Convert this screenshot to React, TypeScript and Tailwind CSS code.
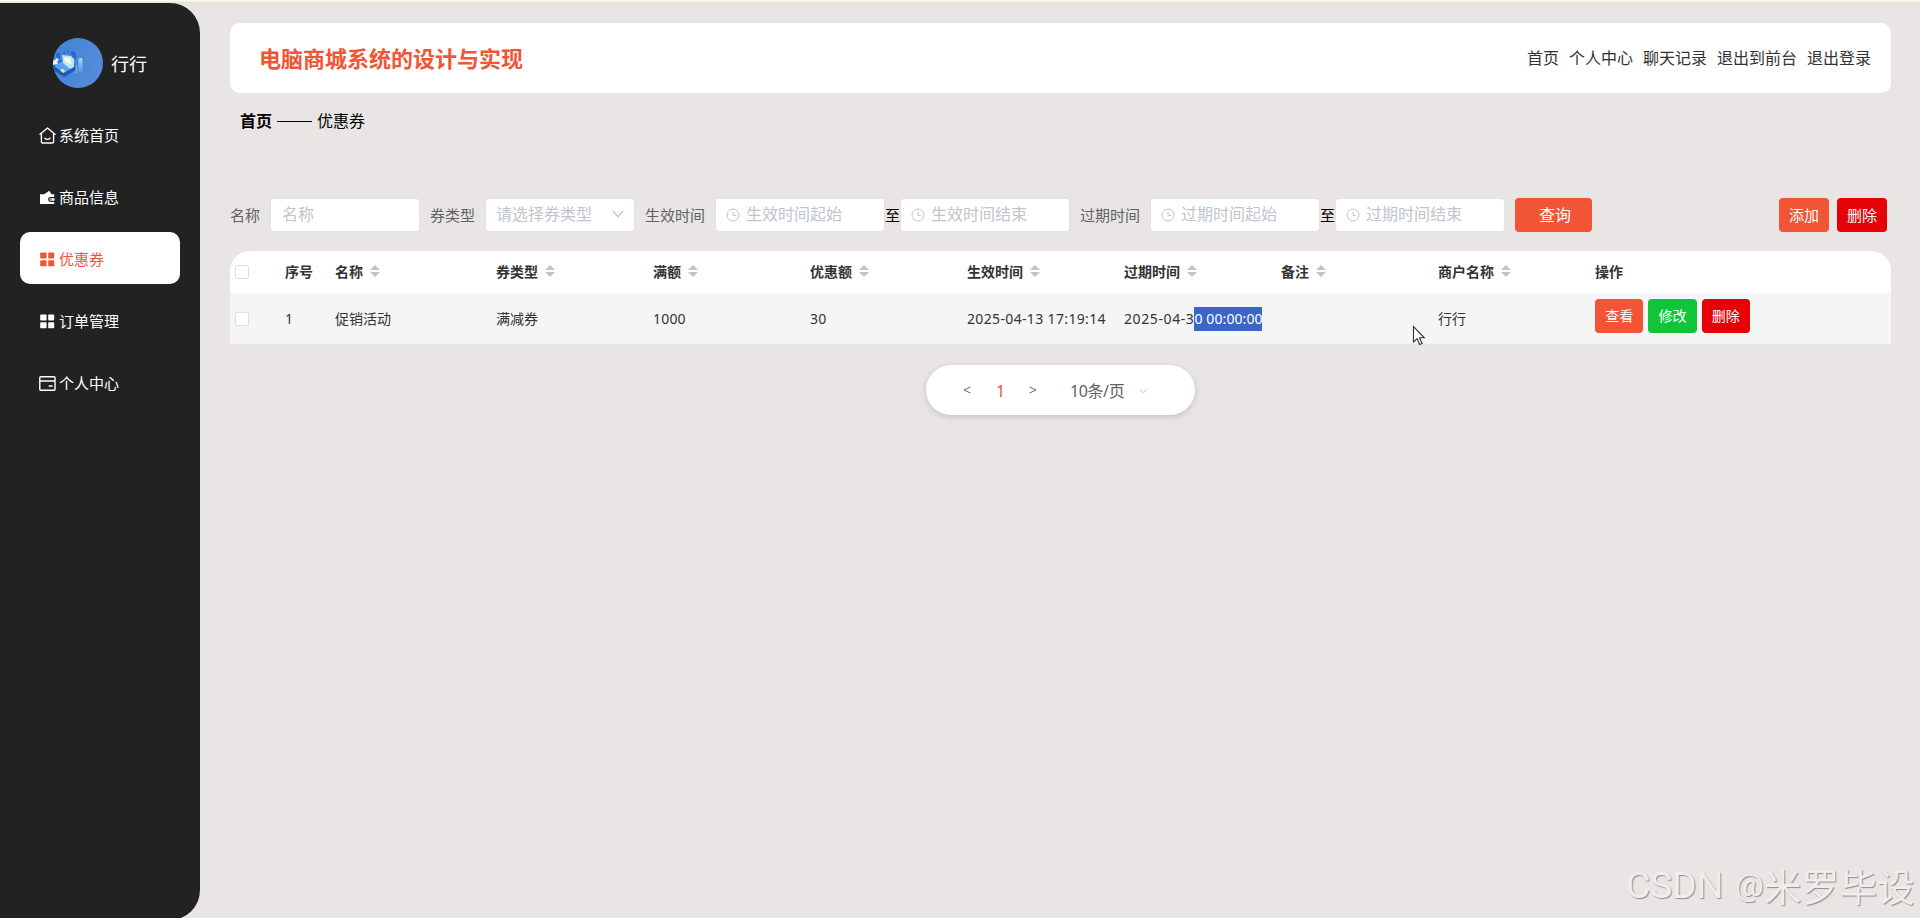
import React from 'react';
import clsx from 'clsx';

const HomeIcon = () => (
  <svg width="17" height="17" viewBox="0 0 17 17" fill="none" stroke="currentColor" strokeWidth="1.4" strokeLinecap="round" strokeLinejoin="round">
    <path d="M1 7.2 8.5 1 16 7.2M2.4 6.4v8.4c0 .7.4 1.2 1.2 1.2h9.8c.8 0 1.2-.5 1.2-1.2V6.4M6 11.2c1.3 1.3 3.7 1.3 5 0" />
  </svg>
);

const WalletIcon = () => (
  <svg width="17" height="17" viewBox="0 0 17 17" fill="currentColor">
    <path d="M1 5.2h4.2l5.2-3.4 2 3.4h2.8v2.9h-3.7a2.4 2.4 0 0 0 0 4.8h3.7V15H1Z" />
    <path d="M11.7 9.2h3.8v2.5h-3.8a1.25 1.25 0 0 1 0-2.5Z" />
    <circle cx="12" cy="10.45" r=".6" fill="#222" />
  </svg>
);

const GridIcon = () => (
  <svg width="17" height="17" viewBox="0 0 17 17" fill="currentColor">
    <rect x="1.2" y="1.5" width="6.4" height="6" rx=".8" />
    <rect x="9.2" y="1.5" width="6" height="6" rx=".8" />
    <rect x="1.2" y="9.3" width="6.4" height="6" rx=".8" />
    <rect x="9.2" y="9.3" width="6" height="6" rx=".8" />
  </svg>
);

const CardIcon = () => (
  <svg width="17" height="17" viewBox="0 0 17 17" fill="none" stroke="currentColor" strokeWidth="1.4" strokeLinejoin="round">
    <rect x=".8" y="1.7" width="15.2" height="13.6" rx="1" />
    <path d="M.8 6h15.2M9.7 11h3.8" />
  </svg>
);

const ClockIcon = () => (
  <svg width="14" height="14" viewBox="0 0 14 14" fill="none" stroke="#c0c4cc" strokeWidth="1">
    <circle cx="7" cy="7" r="6" />
    <path d="M7 3.6V7.4h3.2" />
  </svg>
);

const ArrowDown = ({ className }: any) => (
  <svg className={className} viewBox="0 0 12 8" fill="none" stroke="#b6bac2" strokeWidth="1.1">
    <path d="M1 1.2 6 6.6l5-5.4" />
  </svg>
);

const Avatar = () => (
  <svg width="50" height="50" viewBox="0 0 50 50">
    <defs>
      <clipPath id="round">
        <circle cx="25" cy="25" r="25" />
      </clipPath>
      <linearGradient id="sky" x1="0" y1="0" x2="1" y2="0.3">
        <stop offset="0" stopColor="#3f83d3" />
        <stop offset="1" stopColor="#558bdb" />
      </linearGradient>
      <linearGradient id="bar" x1="0" y1="0" x2="0" y2="1">
        <stop offset="0" stopColor="#a6dcfa" />
        <stop offset="1" stopColor="#5a98e2" />
      </linearGradient>
    </defs>
    <g clipPath="url(#round)">
      <rect width="50" height="50" fill="url(#sky)" />
      <path d="m0 27 11-6 12 6v5l-12 7L0 32Z" fill="#2158bd" />
      <path d="m1 28 10-6 11 6-11 7Z" fill="#5ba2ef" />
      <path d="m3 16 4-2v8H3ZM17 14l3-1 3 2v7l-3-2Z" fill="#2c68cc" />
      <path d="m9 17 9 1 3 3v8l-4 2-7-6Z" fill="#bfe2f6" />
      <path d="m11 19 6 1 2 6-7-2Z" fill="#f8fbdc" />
      <path d="m0 22 4 1 1 3-5 1ZM3 20l3 1-2 3-2-1Z" fill="#e8f7ff" />
      <path d="m7 32 3-1 2 2-2 2Z" fill="#f3e9a0" />
      <path d="M11 15.500v-2M15 15v-2" stroke="#2562c9" strokeWidth="1.200" />
      <rect x="25.500" y="20" width="4" height="14" rx="1.500" fill="url(#bar)" />
      <rect x="22.500" y="27" width="1.500" height="8" fill="#74b5f0" />
    </g>
  </svg>
);

const menus = [
  { name: '系统首页', icon: <HomeIcon /> },
  { name: '商品信息', icon: <WalletIcon /> },
  { name: '优惠券', icon: <GridIcon />, active: true },
  { name: '订单管理', icon: <GridIcon /> },
  { name: '个人中心', icon: <CardIcon /> },
];

const links = ['首页', '个人中心', '聊天记录', '退出到前台', '退出登录'];

const columns = [
  { label: '序号' },
  { label: '名称', sortable: true },
  { label: '券类型', sortable: true },
  { label: '满额', sortable: true },
  { label: '优惠额', sortable: true },
  { label: '生效时间', sortable: true },
  { label: '过期时间', sortable: true },
  { label: '备注', sortable: true },
  { label: '商户名称', sortable: true },
  { label: '操作' },
];

const gridCols = 'grid grid-cols-[55px_50px_161px_repeat(7,157px)_1fr] items-center';

const Checkbox = () => (
  <span className="ml-[5px] block h-3.5 w-3.5 rounded-[2px] border border-[#dcdfe6] bg-white" />
);

const SortCaret = () => (
  <span className="mb-0.5 ml-[7px] flex flex-col gap-[2px]">
    <span className="border-x-[5px] border-b-[5px] border-x-transparent border-b-[#c0c4cc]" />
    <span className="border-x-[5px] border-t-[5px] border-x-transparent border-t-[#c0c4cc]" />
  </span>
);

const Label = ({ children }: any) => (
  <span className="mr-[11px] mt-px text-[15px] text-[#606266]">{children}</span>
);

const DateInput = ({ placeholder }: any) => (
  <div className="flex h-8 w-[168px] items-center rounded-[3px] bg-white pl-2.5 text-base text-[#c0c4cc] shadow-[0_0_0_1px_#e2e1e3]">
    <ClockIcon />
    <span className="mb-0.5 ml-[6px]">{placeholder}</span>
  </div>
);

const DateRange = ({ label }: any) => (
  <div className="mr-[11px] flex items-center">
    <Label>{label}</Label>
    <DateInput placeholder={`${label}起始`} />
    <span className="w-[17px] text-center text-[15px] text-black">至</span>
    <DateInput placeholder={`${label}结束`} />
  </div>
);

const Button = ({ className, children }: any) => (
  <button className={clsx('h-[34px] rounded-[4px] text-white', className)}>{children}</button>
);

const Sidebar = () => (
  <aside className="h-[917px] w-[200px] shrink-0 rounded-r-[30px] bg-[#222] px-5 text-white">
    <div className="flex h-[105px] items-start pl-[33px] pt-[35px]">
      <Avatar />
      <span className="ml-2 mt-3 text-lg leading-7">行行</span>
    </div>
    <nav className="flex flex-col gap-2.5">
      {menus.map((item) => (
        <div
          key={item.name}
          className={clsx(
            'flex h-[52px] items-center rounded-[10px] pl-[18.5px] pt-[2px] text-[15px]',
            item.active && 'bg-white text-[#f15536]'
          )}
        >
          {item.icon}
          <span className="ml-[3.5px]">{item.name}</span>
        </div>
      ))}
    </nav>
  </aside>
);

const Header = () => (
  <header className="flex h-[70px] items-center justify-between rounded-[10px] bg-white pl-[29px] pr-5">
    <h1 className="text-[22px] font-bold text-[#f15536]">电脑商城系统的设计与实现</h1>
    <div className="flex gap-2.5 text-base text-[#333]">
      {links.map((link) => (
        <a key={link}>{link}</a>
      ))}
    </div>
  </header>
);

const Filters = () => (
  <div className="mt-[48px] flex h-[34px] items-center">
    <Label>名称</Label>
    <div className="mr-[11px] flex h-8 w-[148px] items-center rounded-[3px] bg-white pb-0.5 pl-[11px] text-base text-[#c0c4cc] shadow-[0_0_0_1px_#e2e1e3]">
      名称
    </div>
    <Label>券类型</Label>
    <div className="mr-[11px] flex h-8 w-[148px] items-center justify-between rounded-[3px] bg-white pb-0.5 pl-2.5 pr-[10px] text-base text-[#c0c4cc] shadow-[0_0_0_1px_#e2e1e3]">
      请选择券类型
      <ArrowDown className="h-2 w-3" />
    </div>
    <DateRange label="生效时间" />
    <DateRange label="过期时间" />
    <Button className="w-[77px] bg-[#f15536] pb-px pl-[3px] text-base">查询</Button>
    <div className="ml-auto mr-1 flex gap-2 text-[15px]">
      <Button className="w-[50px] bg-[#f15536]">添加</Button>
      <Button className="w-[50px] bg-[#e60008]">删除</Button>
    </div>
  </div>
);

const CouponTable = () => (
  <div className="mt-[19px] overflow-hidden rounded-t-[20px] text-sm text-[#333]">
    <div className={clsx(gridCols, 'h-[42px] bg-white font-bold')}>
      <Checkbox />
      {columns.map((col) => (
        <div key={col.label} className="flex items-center">
          {col.label}
          {col.sortable && <SortCaret />}
        </div>
      ))}
    </div>
    <div className={clsx(gridCols, 'h-[51px] bg-[#f5f5f6]')}>
      <Checkbox />
      <span>1</span>
      <span>促销活动</span>
      <span>满减券</span>
      <span className="tracking-[0.2px]">1000</span>
      <span className="tracking-[0.2px]">30</span>
      <span className="whitespace-nowrap tracking-[0.35px]">2025-04-13 17:19:14</span>
      <span className="whitespace-nowrap">
        <span className="tracking-[0.6px]">2025-04-3</span>
        <span className="inline-block h-6 w-[68px] bg-[#3a66c8] leading-6 tracking-[0.1px] text-white">0 00:00:00</span>
      </span>
      <span />
      <span>行行</span>
      <div className="mb-1.5 flex gap-[5px]">
        <Button className="w-[48.3px] bg-[#f15536]">查看</Button>
        <Button className="w-[48.3px] bg-[#11c53b]">修改</Button>
        <Button className="w-[48.3px] bg-[#e60008]">删除</Button>
      </div>
    </div>
  </div>
);

const Pagination = () => (
  <div className="mx-auto mt-[21px] flex h-[50px] w-[269px] items-center rounded-full bg-white pl-[37px] text-[#606266] shadow-[0_2px_6px_rgba(0,0,0,0.16)]">
    <svg width="8" height="8" viewBox="0 0 8 8" fill="none" stroke="currentColor">
      <path d="M7.500 1 1 4l6.500 3" />
    </svg>
    <span className="ml-[25px] mt-0.5 w-[10px] text-base text-[#f15536]">1</span>
    <svg className="ml-[23px]" width="8" height="8" viewBox="0 0 8 8" fill="none" stroke="currentColor">
      <path d="M.5 1 7 4 .5 7" />
    </svg>
    <span className="ml-[33px] mt-0.5 w-[54px] whitespace-nowrap text-base tracking-[-0.4px]">10条/页</span>
    <ArrowDown className="ml-[15px] mt-0.5 h-[6px] w-[9px]" />
  </div>
);

const App = () => {
  return (
    <div className="relative h-[918px] w-[1920px] overflow-hidden bg-[#e9e5e5] font-['Noto_Sans','Noto_Sans_CJK_SC',sans-serif]">
      <div className="h-[3px] border-b border-[#e3e2d4] bg-[#f6f7e7]" />
      <div className="flex">
        <Sidebar />
        <main className="ml-[30px] w-[1661px] pt-5">
          <Header />
          <div className="ml-2.5 mt-4 flex h-6 items-center text-base text-black">
            <span className="font-bold">首页</span>
            <span className="mx-[5px] h-px w-[35px] bg-black" />
            <span>优惠券</span>
          </div>
          <div className="h-[17px]" />
          <Filters />
          <CouponTable />
          <Pagination />
        </main>
      </div>

      {/* mouse pointer */}
      <svg className="absolute left-[1412px] top-[325px]" width="15" height="21" viewBox="0 0 15 21" fill="#fff" stroke="#333" strokeWidth="1.1">
        <path d="M1.500 1.500v15.500l3.600-3.300 2.600 5.800 2.400-1-2.600-5.700h4.800Z" />
      </svg>

      {/* watermark */}
      <div className="absolute left-[1626px] top-[857px] flex h-14 items-center whitespace-nowrap text-[37.5px] text-[#efeded] [text-shadow:1px_1px_1px_#8f8c8c]">
        <span className="w-[109px] font-['Roboto'] tracking-[-0.3px]">CSDN</span>
        <span className="w-[29px] font-['Roboto'] text-[32px]">@</span>
        <span className="font-['Noto_Sans_CJK_SC'] tracking-[0.2px]">米罗毕设</span>
      </div>
    </div>
  );
};

export default App;
